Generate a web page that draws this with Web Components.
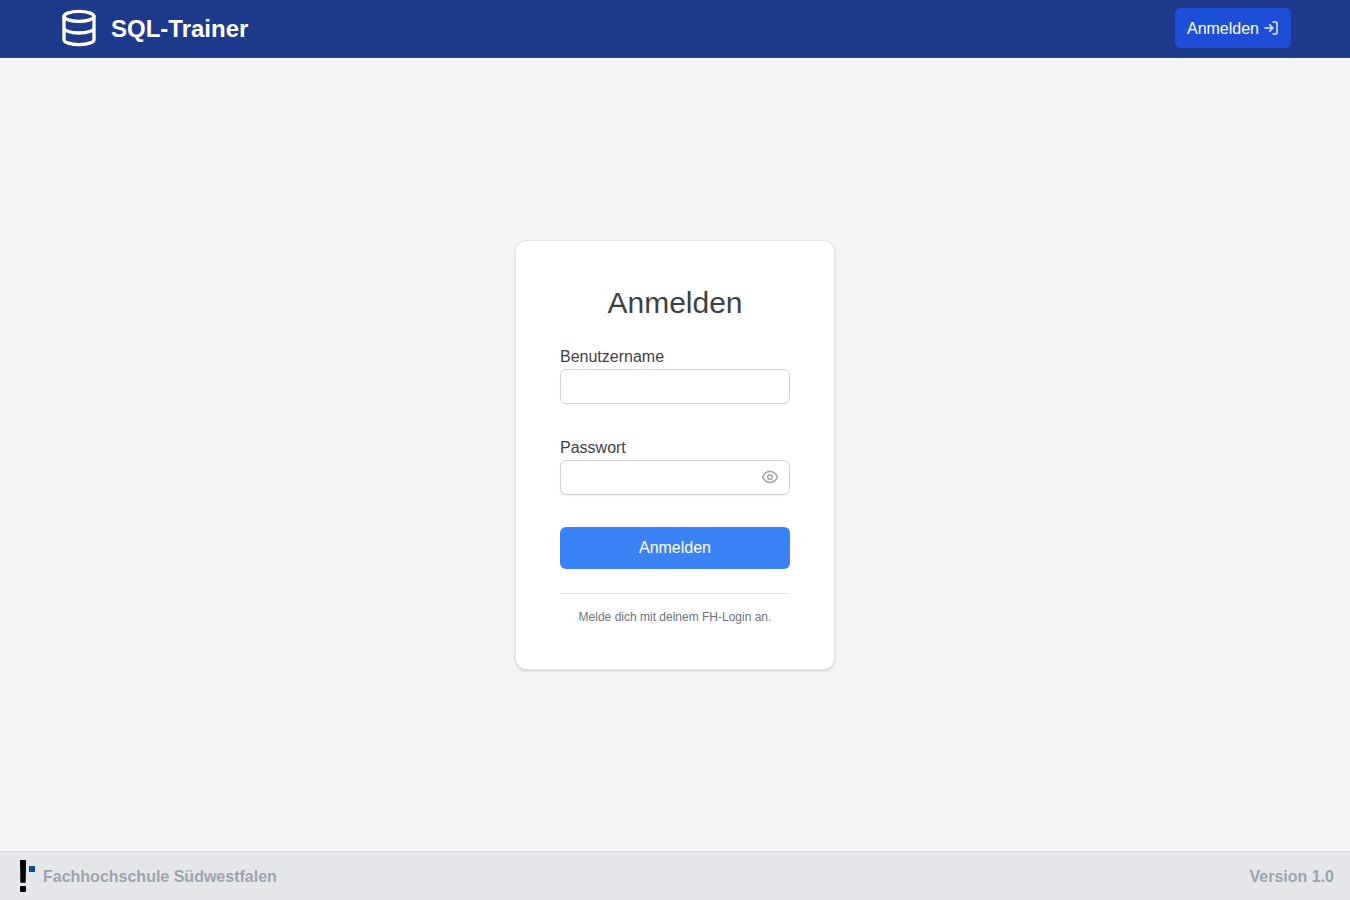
<!DOCTYPE html>
<html lang="de">
<head>
<meta charset="utf-8">
<meta name="viewport" content="width=device-width, initial-scale=1">
<title>SQL-Trainer</title>
<style>
  body { margin: 0; font-family: "Liberation Sans", Arial, sans-serif; font-size: 16px; line-height: 24px; }
</style>
</head>
<body>
<sql-app></sql-app>
<script>
const define = (name, html) => {
  const template = document.createElement('template');
  template.innerHTML = '<style>*{box-sizing:border-box}</style>' + html;
  customElements.define(name, class extends HTMLElement {
    constructor() {
      super();
      this.attachShadow({ mode: 'open' }).append(template.content.cloneNode(true));
    }
  });
};

define('app-header', `
<style>
  :host { display: block; background: #1e3a8a; border-bottom: 1px solid #1e40af; padding: 8px 0 9px; }
  .bar { display: flex; align-items: center; justify-content: space-between; max-width: 1280px; margin: 0 auto; padding: 0 24px; box-sizing: border-box; }
  .brand { display: flex; align-items: center; gap: 12px; color: #fff; font-size: 24px; line-height: 32px; font-weight: 700; text-decoration: none; }
  .brand span, button span { padding-top: 2px; }
  svg { display: block; fill: none; stroke: currentColor; stroke-width: 2; stroke-linecap: round; stroke-linejoin: round; }
  button { display: flex; align-items: center; gap: 4px; height: 40px; padding: 0 12px; border: 0; border-radius: 6px; background: #1d4ed8; color: #fff; font: inherit; cursor: pointer; }
  button svg { stroke-width: 2.25; opacity: .9; }
</style>
<div class="bar">
  <a class="brand" href="#">
    <svg width="40" height="40" viewBox="0 0 24 24" aria-hidden="true"><ellipse cx="12" cy="5" rx="9" ry="3"/><path d="M3 5v14c0 1.66 4.03 3 9 3s9-1.34 9-3V5M3 12c0 1.66 4.03 3 9 3s9-1.34 9-3"/></svg>
    <span>SQL-Trainer</span>
  </a>
  <button type="button"><span>Anmelden</span>
    <svg width="16" height="16" viewBox="0 0 24 24" aria-hidden="true"><path d="M15 3h4a2 2 0 0 1 2 2v14a2 2 0 0 1-2 2h-4M10 17l5-5-5-5M15 12H3"/></svg>
  </button>
</div>`);

define('login-card', `
<style>
  :host { display: block; width: 320px; padding: 44px; border: 1px solid #e5e7eb; border-radius: 12px; background: #fff; box-shadow: 0 1px 3px rgba(0,0,0,.1), 0 1px 2px rgba(0,0,0,.06); color: #3f3f46; box-sizing: border-box; }
  h1 { margin: 0 0 24px; font-size: 30px; line-height: 36px; font-weight: 400; text-align: center; }
  form { display: grid; grid-template-columns: minmax(0, 1fr); gap: 32px; }
  label { display: block; }
  .box { display: flex; align-items: center; height: 35px; padding: 0 10px; border: 1px solid #d1d5db; border-radius: 6px; background: #fff; box-shadow: 0 1px 2px rgba(0,0,0,.05); }
  .box:focus-within { border-color: #3b82f6; }
  input { flex: 1; min-width: 0; padding: 0; border: 0; outline: 0; background: none; font: inherit; color: inherit; }
  .eye { display: flex; padding: 0; border: 0; background: none; color: #a1a1aa; cursor: pointer; }
  .submit { padding: 9px 16px; border: 0; border-radius: 6px; background: #3b82f6; color: #fff; font: inherit; cursor: pointer; }
  p { margin: 24px 0 0; padding-top: 15px; border-top: 1px solid #e5e7eb; color: #6b7280; font-size: 12px; line-height: 16px; text-align: center; }
</style>
<h1>Anmelden</h1>
<form>
  <div>
    <label for="user">Benutzername</label>
    <div class="box"><input id="user" type="text" autocomplete="username"></div>
  </div>
  <div>
    <label for="pass">Passwort</label>
    <div class="box">
      <input id="pass" type="password" autocomplete="current-password">
      <button class="eye" type="button" aria-label="Passwort anzeigen">
        <svg width="18" height="18" viewBox="0 0 18 18" fill="none" stroke="currentColor" stroke-width="1.5" stroke-linejoin="round" aria-hidden="true"><path d="M1.9 9.6q-.3-.6 0-1.2C3.500 5.300 6 3.500 9 3.500s5.500 1.800 7.100 4.900q.3.6 0 1.200C14.500 12.700 12 14.500 9 14.500S3.500 12.700 1.900 9.600z"/><circle cx="9" cy="9" r="2.300"/></svg>
      </button>
    </div>
  </div>
  <button class="submit" type="submit">Anmelden</button>
</form>
<p>Melde dich mit deinem FH-Login an.</p>`);

define('app-footer', `
<style>
  :host { display: flex; align-items: center; justify-content: space-between; padding: 8px 16px; border-top: 1px solid #d1d5db; background: #e5e7eb; color: #9ca3af; font-weight: 700; }
  .org { display: flex; align-items: center; gap: 8px; padding-left: 4px; }
  span { padding-top: 2px; }
  svg { display: block; }
</style>
<div class="org">
  <svg width="15" height="32" viewBox="0 0 15 32" aria-hidden="true"><path d="M0 0h6l-.3 22.800H.4z"/><rect y="26" width="6" height="6" rx="1"/><rect x="9" y="6" width="6" height="6" fill="#004f9f"/></svg>
  <span>Fachhochschule Südwestfalen</span>
</div>
<span>Version 1.0</span>`);

define('sql-app', `
<style>
  :host { display: flex; flex-direction: column; min-height: 100vh; background: #f3f4f6; }
  main { flex: 1; display: grid; place-items: center; padding: 16px; }
</style>
<app-header></app-header>
<main><login-card></login-card></main>
<app-footer></app-footer>`);
</script>
</body>
</html>
